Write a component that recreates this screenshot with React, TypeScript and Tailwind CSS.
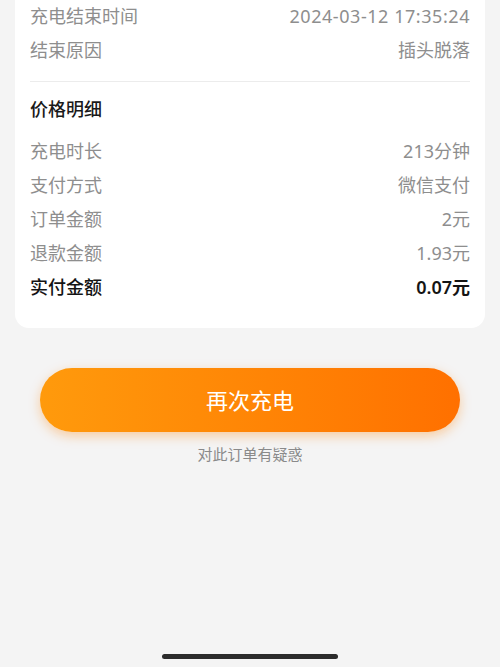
const font = { fontFamily: '"Noto Sans", "Noto Sans CJK SC", sans-serif' };

const topRows = [
  { label: "充电结束时间", value: "2024-03-12 17:35:24", wide: true },
  { label: "结束原因", value: "插头脱落" },
];

const priceRows = [
  { label: "充电时长", value: "213分钟" },
  { label: "支付方式", value: "微信支付" },
  { label: "订单金额", value: "2元" },
  { label: "退款金额", value: "1.93元" },
];

function Row({
  label,
  value,
  strong,
  wide,
}: {
  label: string;
  value: string;
  strong?: boolean;
  wide?: boolean;
}) {
  return (
    <div className="h-[34px] flex items-center justify-between">
      <span className={strong ? "text-[#141414] font-medium" : "text-[#8e8e8e]"}>{label}</span>
      <span
        className={
          (strong ? "text-[#141414] font-semibold" : "text-[#8e8e8e]") +
          (wide ? " tracking-[0.55px]" : "")
        }
      >
        {value}
      </span>
    </div>
  );
}

export default function App() {
  return (
    <div
      className="w-[500px] h-[667px] bg-[#f4f4f4] flex flex-col overflow-hidden text-[18px] leading-none"
      style={font}
    >
      <div className="-mt-[1px] mx-[15px] bg-white rounded-b-[14px] px-[15px] pb-[24px]">
        {topRows.map((r) => (
          <Row key={r.label} label={r.label} value={r.value} wide={r.wide} />
        ))}
        <div className="mt-[14px] h-px bg-[#ececec]" />
        <div className="h-[28px] mt-[13px] flex items-center text-[#1a1a1a] font-medium">
          价格明细
        </div>
        <div className="mt-[11px]">
          {priceRows.map((r) => (
            <Row key={r.label} label={r.label} value={r.value} />
          ))}
          <Row label="实付金额" value="0.07元" strong />
        </div>
      </div>

      <button className="mt-[40px] mx-[40px] h-[64px] rounded-full bg-gradient-to-r from-[#ff9a0c] to-[#ff7000] text-white text-[22px] shadow-[0_4px_12px_rgba(255,130,0,0.35)]">
        再次充电
      </button>
      <div className="mt-[14px] text-center text-[15px] text-[#8a8a8a] leading-[16px]">
        对此订单有疑惑
      </div>

      <div className="mt-auto mb-[8px] mx-auto w-[176px] h-[5px] rounded-full bg-[#2b2b2b]" />
    </div>
  );
}
